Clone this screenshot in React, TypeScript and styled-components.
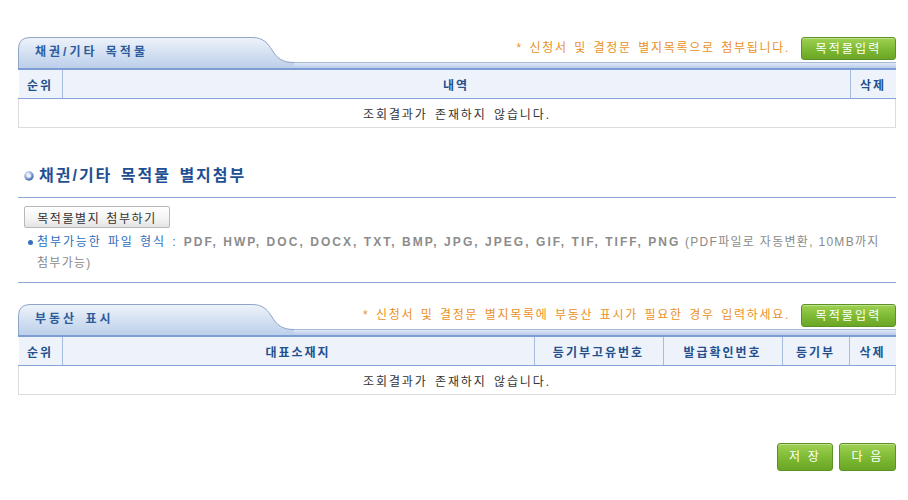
import React from "react";
import styled, { createGlobalStyle } from "styled-components";

const Global = createGlobalStyle`
  html, body { margin: 0; padding: 0; background: #fff; }
  body { font-family: "Liberation Sans", "Noto Sans CJK KR", sans-serif; font-size: 12px; color: #333; }
`;

const Page = styled.div`
  width: 878px;
  margin-left: 18px;
  padding-top: 37px;
`;

const HeaderBar = styled.div`
  display: flex;
  height: 31px;
  border-bottom: 2px solid #7e9ed3;
  background: linear-gradient(to bottom, #a7b9d3 0, #a7b9d3 1px, #dfe8f6 1px, #b9cce9 100%) left bottom / 100% 6px no-repeat;
`;

const Tab = styled.div`
  position: relative;
  width: 276px;
  flex: none;
`;

const TabShape = styled.svg`
  position: absolute;
  left: 0;
  top: 0;
`;

const TabLabel = styled.div`
  position: relative;
  padding: 7px 0 0 17px;
  line-height: 16px;
  font-weight: bold;
  font-size: 12px;
  letter-spacing: 3px;
  word-spacing: 2px;
  color: #2c5b9c;
`;

const HeaderRight = styled.div`
  flex: 1;
  height: 25px;
  display: flex;
  justify-content: flex-end;
  align-items: flex-start;
  gap: 11px;
`;

const Note = styled.span`
  color: #eb911f;
  letter-spacing: 1.7px;
  word-spacing: 1.5px;
  line-height: 16px;
  padding-top: 3px;
  white-space: nowrap;
`;

const GreenButton = styled.button<{ $w: number; $h: number }>`
  width: ${(p) => p.$w}px;
  height: ${(p) => p.$h}px;
  padding: 0;
  border: 1px solid #5b9226;
  border-radius: 3px;
  background: linear-gradient(to bottom, #9fd152 0%, #80bb36 50%, #6aa524 100%);
  color: #fff;
  font-family: "Liberation Sans", "Noto Sans CJK KR", sans-serif;
  font-size: 12px;
  letter-spacing: 2.2px;
  line-height: 14px;
  box-shadow: inset 0 1px 0 rgba(255, 255, 255, 0.35);
  cursor: pointer;
`;

const Table = styled.table`
  width: 100%;
  border-collapse: collapse;
  table-layout: fixed;
`;

const Th = styled.th<{ $w?: number; $last?: boolean }>`
  ${(p) => (p.$w ? `width: ${p.$w}px;` : "")}
  height: 28px;
  padding: 0;
  background: #eef3fb;
  border-bottom: 1px solid #86a5d6;
  border-right: ${(p) => (p.$last ? "none" : "1px solid #a6bcdf")};
  color: #234f8d;
  font-weight: bold;
  font-size: 12px;
  letter-spacing: 2px;
  text-align: center;
`;

const Td = styled.td`
  height: 28px;
  padding: 0;
  border: 1px solid #dcdcdc;
  border-top: none;
  text-align: center;
  color: #333;
  letter-spacing: 1.9px;
  word-spacing: 2px;
`;

const TitleRow = styled.div`
  margin-top: 37px;
  height: 22px;
  display: flex;
  align-items: center;
  gap: 5px;
  padding-left: 6px;
`;

const Title = styled.h2`
  margin: 0;
  font-size: 16px;
  font-weight: bold;
  letter-spacing: 2px;
  word-spacing: 2px;
  color: #1f4f93;
  line-height: 22px;
`;

const Divider = styled.div<{ $mt: number }>`
  margin-top: ${(p) => p.$mt}px;
  height: 1px;
  background: #8ea9d7;
`;

const GrayButton = styled.button`
  display: block;
  margin: 8px 0 0 6px;
  width: 146px;
  height: 22px;
  padding: 0;
  border: 1px solid #b8b8b8;
  border-radius: 2px;
  background: linear-gradient(to bottom, #ffffff 0%, #f3f3f3 60%, #e4e4e4 100%);
  color: #333;
  font-family: "Liberation Sans", "Noto Sans CJK KR", sans-serif;
  font-size: 12px;
  letter-spacing: 1.6px;
  word-spacing: 1px;
  cursor: pointer;
`;

const InfoLine = styled.div`
  margin-top: 4px;
  display: flex;
  align-items: flex-start;
  gap: 4px;
  padding-left: 10px;
  padding-right: 4px;
  line-height: 21px;
`;

const Dot = styled.span`
  flex: none;
  width: 5px;
  height: 5px;
  margin-top: 8px;
  border-radius: 50%;
  background: #3a6fbf;
`;

const InfoText = styled.p`
  margin: 0;
  letter-spacing: 1.3px;
  word-break: keep-all;
  color: #8a8a8a;
`;

const InfoLabel = styled.span`
  color: #2f6dbd;
  letter-spacing: 1.9px;
  word-spacing: 1px;
`;

const Formats = styled.span`
  font-weight: bold;
  letter-spacing: 2.05px;
  color: #8c8c8c;
`;

const Section = styled.div<{ $mt: number }>`
  margin-top: ${(p) => p.$mt}px;
`;

const Footer = styled.div`
  margin-top: 48px;
  display: flex;
  justify-content: flex-end;
  gap: 6px;
`;

const TabBg = ({ id }: { id: string }) => (
  <TabShape width="276" height="31" viewBox="0 0 276 31">
    <defs>
      <linearGradient id={id} x1="0" y1="0" x2="0" y2="1">
        <stop offset="0" stopColor="#eef3fa" />
        <stop offset="1" stopColor="#bccfea" />
      </linearGradient>
    </defs>
    <path
      d="M0.5,31 L0.5,12 Q0.5,0.5 12,0.5 L234,0.5 C246,0.5 250,7 254,13 C259,21 264,25.5 276,25.5 L276,31 Z"
      fill={`url(#${id})`}
    />
    <path
      d="M0.5,31 L0.5,12 Q0.5,0.5 12,0.5 L234,0.5 C246,0.5 250,7 254,13 C259,21 264,25.5 276,25.5"
      fill="none"
      stroke="#8fa6c9"
      strokeWidth="1"
    />
  </TabShape>
);

const Sphere = () => (
  <svg width="10" height="10" viewBox="0 0 10 10">
    <defs>
      <radialGradient id="sph" cx="0.4" cy="0.35" r="0.7">
        <stop offset="0" stopColor="#ffffff" />
        <stop offset="0.35" stopColor="#b9cdef" />
        <stop offset="1" stopColor="#30589f" />
      </radialGradient>
    </defs>
    <circle cx="5" cy="5" r="4.7" fill="url(#sph)" />
    <circle cx="5" cy="5" r="1.8" fill="#f4f7fd" />
  </svg>
);

type Col = { label: string; w?: number };

const DataTable = ({ cols }: { cols: Col[] }) => (
  <Table>
    <thead>
      <tr>
        {cols.map((c, i) => (
          <Th key={c.label} $w={c.w} $last={i === cols.length - 1}>
            {c.label}
          </Th>
        ))}
      </tr>
    </thead>
    <tbody>
      <tr>
        <Td colSpan={cols.length}>조회결과가 존재하지 않습니다.</Td>
      </tr>
    </tbody>
  </Table>
);

const Header = ({ id, title, note }: { id: string; title: string; note: string }) => (
  <HeaderBar>
    <Tab>
      <TabBg id={id} />
      <TabLabel>{title}</TabLabel>
    </Tab>
    <HeaderRight>
      <Note>{note}</Note>
      <GreenButton $w={95} $h={23}>목적물입력</GreenButton>
    </HeaderRight>
  </HeaderBar>
);

export default function App() {
  return (
    <>
      <Global />
      <Page>
        <Section $mt={0}>
          <Header id="tg1" title="채권/기타 목적물" note="* 신청서 및 결정문 별지목록으로 첨부됩니다." />
          <DataTable
            cols={[
              { label: "순위", w: 43 },
              { label: "내역" },
              { label: "삭제", w: 45 },
            ]}
          />
        </Section>

        <TitleRow>
          <Sphere />
          <Title>채권/기타 목적물 별지첨부</Title>
        </TitleRow>
        <Divider $mt={10} />
        <GrayButton>목적물별지 첨부하기</GrayButton>
        <InfoLine>
          <Dot />
          <InfoText>
            <InfoLabel>첨부가능한 파일 형식 : </InfoLabel>
            <Formats>PDF, HWP, DOC, DOCX, TXT, BMP, JPG, JPEG, GIF, TIF, TIFF, PNG</Formats> (PDF파일로 자동변환, 10MB까지
            첨부가능)
          </InfoText>
        </InfoLine>
        <Divider $mt={8} />

        <Section $mt={21}>
          <Header
            id="tg2"
            title="부동산 표시"
            note="* 신청서 및 결정문 별지목록에 부동산 표시가 필요한 경우 입력하세요."
          />
          <DataTable
            cols={[
              { label: "순위", w: 43 },
              { label: "대표소재지" },
              { label: "등기부고유번호", w: 128 },
              { label: "발급확인번호", w: 118 },
              { label: "등기부", w: 66 },
              { label: "삭제", w: 46 },
            ]}
          />
        </Section>

        <Footer>
          <GreenButton $w={56} $h={28}>저 장</GreenButton>
          <GreenButton $w={57} $h={28}>다 음</GreenButton>
        </Footer>
      </Page>
    </>
  );
}
